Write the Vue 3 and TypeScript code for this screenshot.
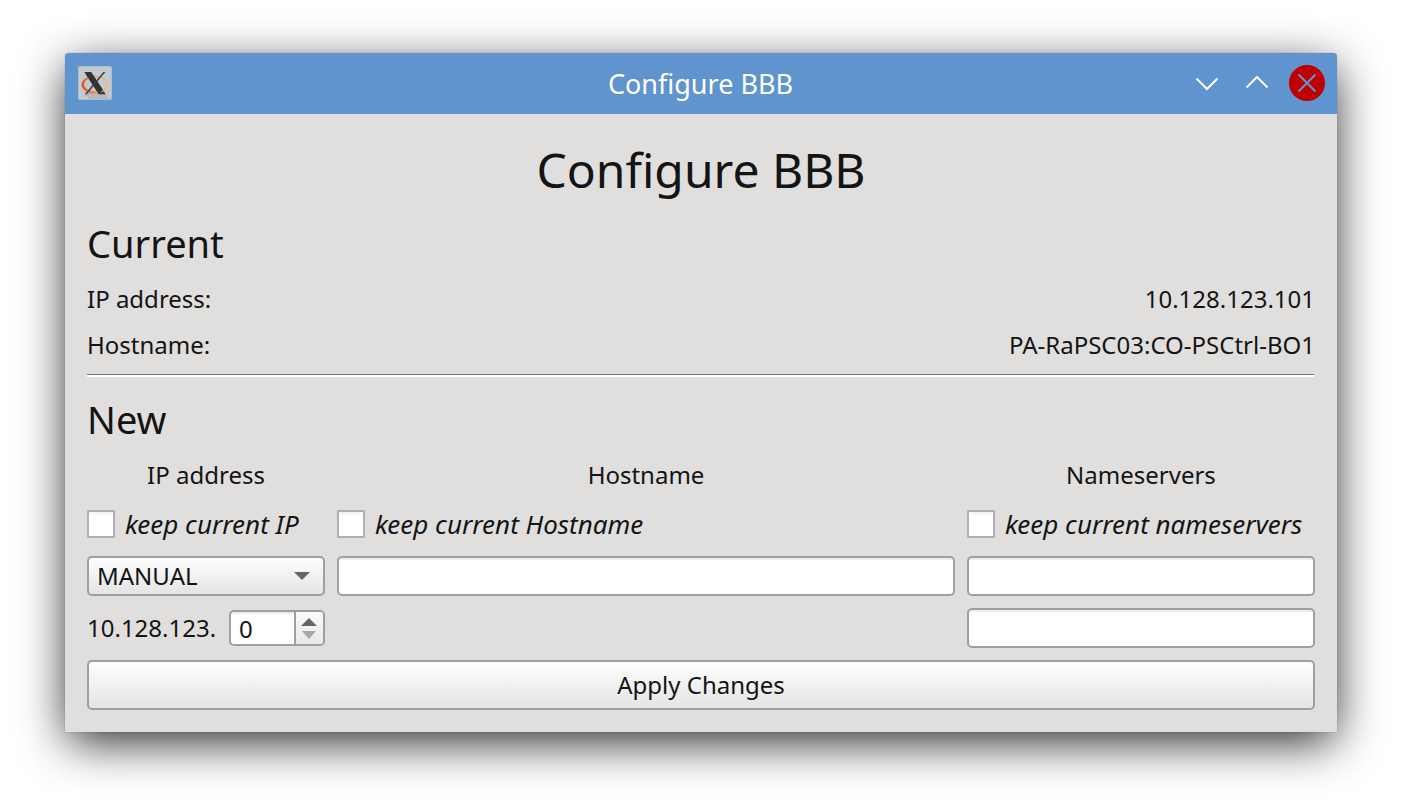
<script setup lang="ts">
import { ref } from 'vue'

interface Field {
  label: string
  value: string
}

const title = 'Configure BBB'
const current: Field[] = [
  { label: 'IP address:', value: '10.128.123.101' },
  { label: 'Hostname:', value: 'PA-RaPSC03:CO-PSCtrl-BO1' },
]
const keepIp = ref(false)
const keepHostname = ref(false)
const keepNameservers = ref(false)
const hostname = ref('')
const nameservers = ref<string[]>(['', ''])
const lastOctet = ref(0)

function step(delta: number): void {
  lastOctet.value = Math.min(255, Math.max(0, lastOctet.value + delta))
}
</script>

<template>
  <main class="desktop">
    <section class="window">
      <header class="titlebar">
        <svg class="app-icon" viewBox="0 0 34 34">
          <defs>
            <linearGradient id="ring" x1="0" x2="1">
              <stop offset="0" stop-color="#f04a1a" />
              <stop offset="0.5" stop-color="#f98b48" />
              <stop offset="1" stop-color="#fcc365" />
            </linearGradient>
          </defs>
          <rect x="0" y="0" width="34" height="34" rx="2" fill="#aebfce" />
          <rect x="1" y="1" width="32" height="32" rx="1.5" fill="#c4cbcf" />
          <path d="M7 28.500L13 24L27.500 28.500L32 33H11.500Z" fill="#b3b9bd" />
          <path d="M6.300 6H13L27.700 28.300H20.800Z" fill="#2f3436" />
          <path
            fill="url(#ring)"
            fill-rule="evenodd"
            d="M3.600 18.700a13.400 9 0 1 0 26.800 0a13.400 9 0 1 0 -26.800 0ZM6.200 18.300a11.300 7.200 0 1 0 22.600 0a11.300 7.200 0 1 0 -22.600 0Z"
          />
          <path d="M8 8.500L13 6L25 24L21 28.300Z" fill="#2f3436" />
          <path d="M25.400 6H27.400L8.800 28.300H6.700Z" fill="#3a4043" />
        </svg>
        <span class="caption">{{ title }}</span>
        <div class="controls">
          <svg viewBox="0 0 36 36"><path d="M7.500 13.500L18 24L28.500 13.500" /></svg>
          <svg viewBox="0 0 36 36"><path d="M7.500 22.500L18 12L28.500 22.500" /></svg>
          <svg viewBox="0 0 36 36" class="close">
            <circle cx="18" cy="18" r="18" />
            <path d="M9.500 9.500L26.500 26.500M26.500 9.500L9.500 26.500" />
          </svg>
        </div>
      </header>

      <div class="content">
        <h1>{{ title }}</h1>
        <h2>Current</h2>
        <dl>
          <div v-for="field in current" :key="field.label" class="pair">
            <dt>{{ field.label }}</dt>
            <dd>{{ field.value }}</dd>
          </div>
        </dl>
        <div class="rule"></div>
        <h2 class="new">New</h2>

        <div class="grid">
          <span class="head">IP address</span>
          <span class="head">Hostname</span>
          <span class="head">Nameservers</span>

          <label class="check"><input v-model="keepIp" type="checkbox" /><em>keep current IP</em></label>
          <label class="check"><input v-model="keepHostname" type="checkbox" /><em>keep current Hostname</em></label>
          <label class="check"><input v-model="keepNameservers" type="checkbox" /><em>keep current nameservers</em></label>

          <button class="select" type="button">
            <span>MANUAL</span>
            <svg width="16" height="8" viewBox="0 0 16 8"><path d="M0 0H16L8 8Z" fill="#666" /></svg>
          </button>
          <input v-model="hostname" class="line" type="text" />
          <input v-model="nameservers[0]" class="line" type="text" />

          <div class="octets">
            <span>10.128.123.</span>
            <div class="spin">
              <span class="number">{{ lastOctet }}</span>
              <div class="steps">
                <svg width="16" height="8" viewBox="0 0 16 8" @click="step(1)"><path d="M0 8H16L8 0Z" fill="#666" /></svg>
                <svg width="14" height="8" viewBox="0 0 14 8" @click="step(-1)"><path d="M0 0H14L7 8Z" fill="#a8a8a8" /></svg>
              </div>
            </div>
          </div>
          <span></span>
          <input v-model="nameservers[1]" class="line" type="text" />
        </div>

        <button class="apply" type="button">Apply Changes</button>
      </div>
    </section>
  </main>
</template>

<style>
body {
  margin: 0;
  background: #fff;
}
</style>

<style scoped>
* {
  box-sizing: border-box;
}
.desktop {
  width: 1402px;
  height: 809px;
  padding: 53px 65px 77px;
  overflow: hidden;
  background: #fff;
  color: #141414;
  font: 24px/32px "Noto Sans", sans-serif;
}
.window {
  height: 679px;
  background: #e0dfde;
  border-radius: 4px 4px 0 0;
  box-shadow: 0 0 1px rgba(0, 0, 0, 0.5), 0 12px 48px -3px rgba(0, 0, 0, 0.87);
}
.titlebar {
  display: grid;
  grid-template-columns: 136px 1fr 136px;
  align-items: center;
  height: 61px;
  padding: 0 12px 0 13px;
  border-radius: 4px 4px 0 0;
  background: #6094cf;
  color: #fff;
}
.app-icon {
  width: 34px;
  height: 34px;
  margin-bottom: 2px;
}
.caption {
  padding-right: 2px;
  text-align: center;
  font-size: 27px;
}
.controls {
  display: flex;
  gap: 14px;
  margin-bottom: 2px;
}
.controls svg {
  width: 36px;
  height: 36px;
  fill: none;
  stroke: #fff;
  stroke-width: 2;
}
.controls .close {
  stroke: #6094cf;
}
.close circle {
  fill: #bf0000;
  stroke: none;
}
.content {
  padding: 23px 22px 22px;
}
h1,
h2,
dl,
dd {
  margin: 0;
}
h1 {
  height: 66px;
  font-size: 48px;
  font-weight: 400;
  line-height: 66px;
  text-align: center;
}
h2 {
  height: 52px;
  margin-top: 14px;
  font-size: 38px;
  font-weight: 400;
  line-height: 52px;
}
dl {
  padding-top: 1px;
}
.pair {
  display: flex;
  justify-content: space-between;
  height: 34px;
  margin-top: 12px;
  line-height: 34px;
}
.rule {
  height: 3px;
  margin: 12px 1px 0 0;
  border-top: 1px solid #747474;
  background: #fff;
}
h2.new {
  margin-top: 16px;
}
.grid {
  display: grid;
  grid-template-columns: 238px 618px 348px;
  grid-template-rows: 34px 40px 40px 40px;
  gap: 12px;
  align-items: center;
  margin-top: 13px;
}
.head {
  text-align: center;
}
.check {
  display: flex;
  align-items: center;
  gap: 10px;
  white-space: nowrap;
}
.check em {
  font-size: 26px;
}
.check input {
  appearance: none;
  width: 28px;
  height: 28px;
  margin: 0;
  border: 2px solid #b0b0b0;
  border-radius: 1px;
  background: linear-gradient(#f0f0f0, #fff 4px);
}
.select,
.line,
.apply,
.spin {
  margin: 0;
  border: 2px solid #9f9f9e;
  border-radius: 5px;
  color: inherit;
  font: inherit;
}
.select,
.apply {
  background: linear-gradient(#fefefe, #e4e4e4);
}
.select {
  display: flex;
  align-items: center;
  justify-content: space-between;
  width: 238px;
  height: 40px;
  padding: 0 13px 0 8px;
}
.line {
  width: 100%;
  height: 40px;
  padding: 0 8px;
  outline: none;
  background: linear-gradient(#ededed 2px, #fff 2px);
}
.octets {
  display: flex;
  align-items: center;
  justify-content: space-between;
}
.spin {
  display: flex;
  width: 96px;
  height: 36px;
  overflow: hidden;
  background: linear-gradient(#ededed 2px, #fff 2px);
}
.number {
  flex: 1;
  padding-left: 8px;
  line-height: 34px;
}
.steps {
  display: flex;
  flex-direction: column;
  align-items: center;
  gap: 5px;
  width: 29px;
  padding: 6px 1px 0 0;
  border-left: 2px solid #9f9f9e;
  background: linear-gradient(#fbfbfb, #e8e8e8);
}
.apply {
  display: block;
  width: 100%;
  height: 50px;
  margin-top: 12px;
  padding: 0;
}
</style>
